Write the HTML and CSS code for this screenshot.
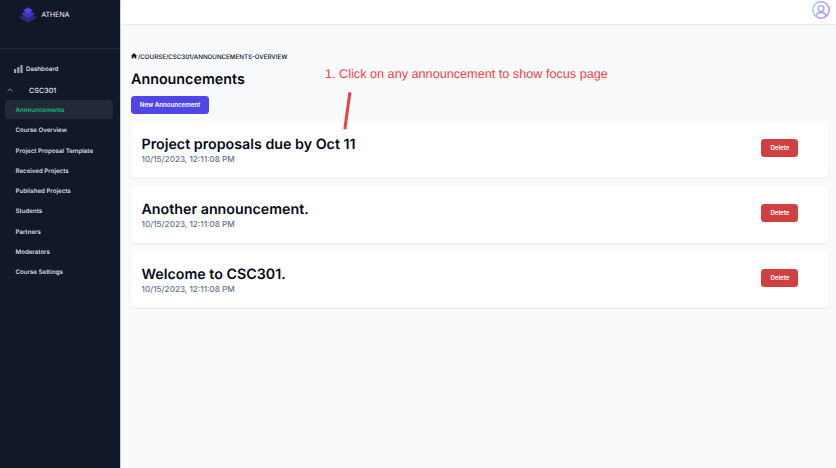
FILE: index.html
```html
<!DOCTYPE html>
<html lang="en">
<head>
<meta charset="utf-8">
<title>Athena – Announcements</title>
<link rel="stylesheet" href="styles.css">
</head>
<body>
<div class="app">
  <aside class="sidebar">
    <div class="brand">
      <svg class="logo" width="18" height="16" viewBox="0 0 18 16">
        <path d="M0 10.6 9 5.8l9 4.8-9 4.8z" fill="#2d2a80"/>
        <path d="M2.2 6.8 9 2.8l6.8 4L9 11z" fill="#3f37b8"/>
        <path d="M4.2 3.3 9 .3l4.8 3L9 6.5z" fill="#4f46e5"/>
      </svg>
      <span>ATHENA</span>
    </div>
    <nav class="nav">
      <a class="dashboard">
        <svg width="9" height="8" viewBox="0 0 9 8" fill="#9ca3af"><rect y="4" width="2.2" height="4" rx=".5"/><rect x="3.2" y="2" width="2.2" height="6" rx=".5"/><rect x="6.4" width="2.2" height="8" rx=".5"/></svg>
        <span>Dashboard</span>
      </a>
      <div class="course">
        <svg width="6" height="4" viewBox="0 0 6 4" fill="none" stroke="#8b93a1" stroke-width=".9"><path d="M.5 3.3 3 .9l2.5 2.4"/></svg>
        <span>CSC301</span>
      </div>
      <ul class="links">
        <li class="active">Announcements</li>
        <li>Course Overview</li>
        <li>Project Proposal Template</li>
        <li>Received Projects</li>
        <li>Published Projects</li>
        <li>Students</li>
        <li>Partners</li>
        <li>Moderators</li>
        <li>Course Settings</li>
      </ul>
    </nav>
  </aside>
  <div class="page">
    <header class="topbar">
      <svg width="18" height="18" viewBox="0 0 18 18" fill="none" stroke="url(#ring)" stroke-width="1.35">
        <defs><linearGradient id="ring" gradientUnits="userSpaceOnUse" x1="0" y1="6" x2="18" y2="11"><stop stop-color="#8fd3fa"/><stop offset=".5" stop-color="#a79df5"/><stop offset="1" stop-color="#c77bf4"/></linearGradient></defs>
        <circle cx="9" cy="9" r="8.2"/><circle cx="9" cy="7.5" r="2.9"/><path d="M3.8 15.2c.8-2.5 2.7-3.7 5.2-3.7s4.4 1.2 5.2 3.7"/>
      </svg>
    </header>
    <main class="content">
      <div class="crumbs">
        <svg width="6" height="6" viewBox="0 0 6 6"><path d="M3 0 6 2.9H5.3V5.6H3.7V3.8H2.3V5.6H.7V2.9H0z" fill="#0b1020"/></svg>
        <span>/COURSE/CSC301/ANNOUNCEMENTS-OVERVIEW</span>
      </div>
      <h1>Announcements</h1>
      <button class="btn primary">New Announcement</button>
      <section class="cards">
        <article class="card"><div><h2>Project proposals due by Oct 11</h2><time>10/15/2023, 12:11:08 PM</time></div><button class="btn danger">Delete</button></article>
        <article class="card"><div><h2>Another announcement.</h2><time>10/15/2023, 12:11:08 PM</time></div><button class="btn danger">Delete</button></article>
        <article class="card"><div><h2>Welcome to CSC301.</h2><time>10/15/2023, 12:11:08 PM</time></div><button class="btn danger">Delete</button></article>
      </section>
    </main>
  </div>
</div>
<div class="note">1. Click on any announcement to show focus page</div>
<svg class="pointer" width="12" height="44" viewBox="0 0 12 44"><path d="M7.7 5.7 3 39.7" stroke="#f04040" stroke-width="3" stroke-linecap="square"/></svg>
</body>
</html>
```
FILE: styles.css
```css
* { box-sizing: border-box; }
body { margin: 0; font-family: Inter, sans-serif; background: #f9fafc; color: #060a18; text-rendering: geometricPrecision; }
h1, h2, ul { margin: 0; padding: 0; }
.app { display: flex; height: 468px; overflow: hidden; }
.sidebar { width: 120px; flex: none; background: #111827; color: #d8dbe0; }
.brand { height: 49px; padding: 7px 0 0 19px; display: flex; align-items: flex-start; gap: 4.5px; border-bottom: 1px solid #242a38; font: 7.3px/16px "Noto Sans", sans-serif; color: #f1f2f4; }
.logo { flex: none; }
.nav { padding-top: 13px; font-size: 6.15px; font-weight: 600; }
.dashboard { display: flex; align-items: center; height: 13px; padding-left: 14px; gap: 3px; }
.dashboard span { padding-top: 1px; }
.course { display: flex; align-items: center; height: 20px; margin-top: 5px; padding-left: 7px; gap: 16px; font-size: 7.2px; font-weight: 500; color: #e5e7eb; }
.links { list-style: none; padding: 0 7px 0 5px; }
.links li { height: 19px; margin-bottom: 1.3px; padding-left: 10.5px; line-height: 21.4px; border-radius: 4px; white-space: nowrap; }
.links .active { background: #232a37; color: #10b981; }
.page { flex: 1; min-width: 0; border-left: 1px solid #c9cbd8; }
.topbar { height: 24px; background: #fff; box-shadow: 0 1px 1px #e9ebef; display: flex; justify-content: flex-end; padding: 1px 6px 0 0; }
.content { padding: 29px 8px 0 10px; }
.crumbs { display: flex; align-items: center; height: 8px; gap: 1px; font-size: 6.2px; font-weight: 500; white-space: nowrap; }
.crumbs svg { margin-bottom: 2px; }
h1 { margin-top: 10px; font-size: 14.3px; line-height: 18px; font-weight: 600; }
.btn { display: block; border: 0; padding: 0; height: 18px; border-radius: 3.5px; color: #fff; font: 600 6.15px/18px Inter, sans-serif; text-align: center; }
.primary { width: 78px; margin-top: 7px; background: #4f46e5; }
.danger { width: 37px; background: #d04040; }
.cards { margin-top: 7px; display: grid; gap: 8px; }
.card { height: 57px; padding: 0 29.6px 3px 10.5px; display: flex; align-items: center; justify-content: space-between; background: #fff; border-radius: 4px; box-shadow: 0 1px 2px #e8eaef; }
.card .danger { margin-bottom: 1px; }
.card h2 { margin-top: 5px; font-size: 14.26px; line-height: 18px; font-weight: 600; white-space: nowrap; }
.card time { display: block; font-size: 8.17px; line-height: 11px; font-weight: 500; color: #64748b; }
.note { position: absolute; left: 325px; top: 66px; font: 12.67px/16px "Liberation Sans", Arial, sans-serif; color: #ef4444; white-space: nowrap; }
.pointer { position: absolute; left: 342px; top: 88px; }
```
